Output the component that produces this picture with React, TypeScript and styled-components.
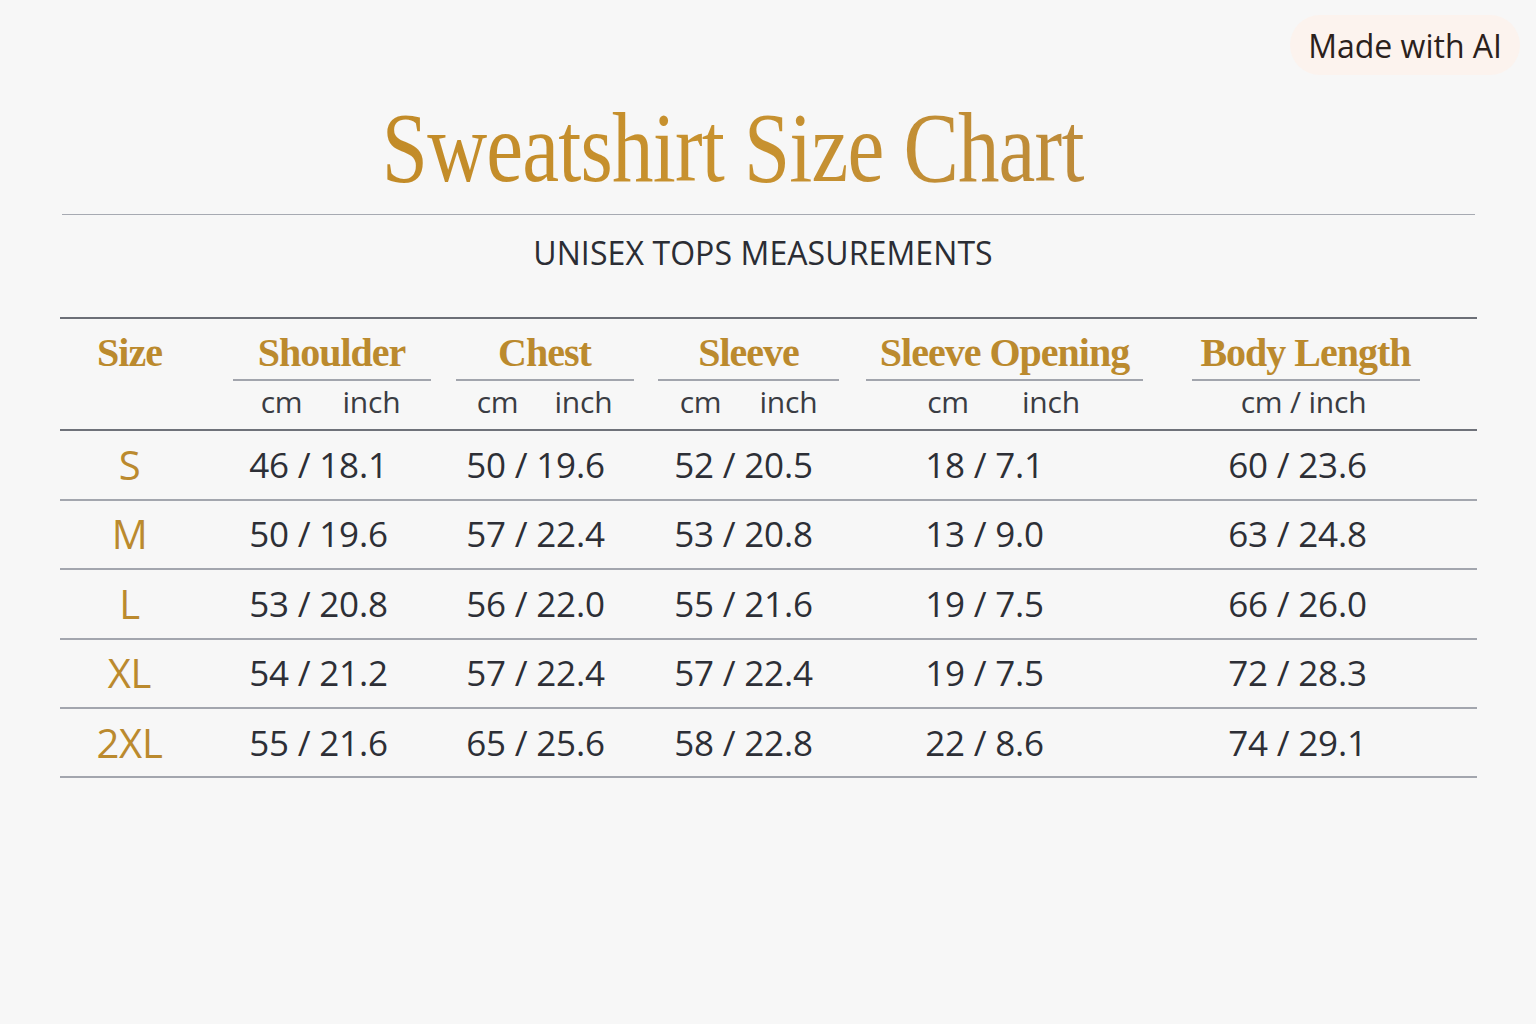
import styled, { createGlobalStyle } from "styled-components";

const GlobalStyle = createGlobalStyle`
  html, body {
    margin: 0;
    padding: 0;
    background: #f7f7f7;
  }
  body {
    font-family: "Open Sans", "Liberation Sans", sans-serif;
    color: #2d2f36;
  }
`;

const GOLD = "#bb8a2e";

const Page = styled.div`
  position: relative;
  min-height: 1024px;
  padding-top: 98px;
  box-sizing: border-box;
`;

const Badge = styled.div`
  position: absolute;
  top: 15px;
  right: 16px;
  height: 60px;
  padding: 0 18px;
  display: flex;
  align-items: center;
  border-radius: 30px;
  background: #fcf3ee;
  color: #2b211c;
  font-size: 32px;
  letter-spacing: 0;
`;

const Sheet = styled.div`
  width: 1417px;
  margin: 0 auto;
`;

const TitleRow = styled.div`
  display: flex;
  justify-content: center;
  padding: 0 70px 16px 0;
  margin: 0 2px;
  border-bottom: 1px solid #a7aab2;
`;

const Title = styled.h1`
  margin: 0;
  display: inline-block;
  font-family: "Liberation Serif", "DejaVu Serif", serif;
  font-weight: 400;
  font-size: 100px;
  line-height: 1;
  letter-spacing: -1px;
  transform: scaleX(0.83);
  background: linear-gradient(90deg, #c28b28 0%, #c8922f 50%, #bd8b3a 100%);
  -webkit-background-clip: text;
  background-clip: text;
  color: transparent;
`;

const Subtitle = styled.div`
  margin-top: 19px;
  padding-right: 10px;
  text-align: center;
  font-size: 32px;
  line-height: 1.2;
  letter-spacing: 0.1px;
  color: #2b2d34;
`;

const Table = styled.div`
  margin-top: 45px;
  border-top: 2px solid #6c6f77;
`;

const columnsTemplate = "140px 248px 194px 210px 300px 1fr";

const HeadGrid = styled.div`
  display: grid;
  grid-template-columns: ${columnsTemplate};
  grid-template-rows: auto auto;
  padding: 10px 15px 9px 0;
  border-bottom: 2px solid #6f727a;
`;

const Shifted = styled.div<{ $shift: number }>`
  padding-left: ${(p) => (p.$shift > 0 ? p.$shift * 2 : 0)}px;
  padding-right: ${(p) => (p.$shift < 0 ? -p.$shift * 2 : 0)}px;
  display: flex;
  justify-content: center;
  min-width: 0;
`;

const Label = styled.div<{ $line?: number }>`
  width: ${(p) => (p.$line ? `${p.$line}px` : "auto")};
  text-align: center;
  font-family: "Liberation Serif", "DejaVu Serif", serif;
  font-weight: 700;
  font-size: 40px;
  line-height: 1.2;
  letter-spacing: -1px;
  color: ${GOLD};
  padding-bottom: 2px;
  border-bottom: ${(p) => (p.$line ? "2px solid #a2a5ad" : "2px solid transparent")};
  white-space: nowrap;
`;

const Units = styled.div<{ $gap: number }>`
  display: flex;
  gap: ${(p) => p.$gap}px;
  margin-top: 3px;
  font-size: 30px;
  line-height: 1.2;
  color: #3a3c43;
  letter-spacing: -0.2px;
`;

const Row = styled.div`
  display: grid;
  grid-template-columns: ${columnsTemplate};
  align-items: center;
  height: 67.4px;
  padding-right: 15px;
  border-bottom: 2px solid #a3a6ae;
`;

const SizeCell = styled.div`
  text-align: center;
  font-size: 40px;
  line-height: 1.2;
  color: ${GOLD};
  letter-spacing: -0.3px;
`;

const Value = styled(Shifted)`
  font-size: 35px;
  line-height: 1.2;
  color: #2d2f36;
  letter-spacing: -0.2px;
`;

type Column = {
  label: string;
  line: number;
  head: number;
  sub: number;
  data: number;
  gap: number;
  units: string[];
};

const columns: Column[] = [
  { label: "Shoulder", line: 198, head: 8, sub: 7, data: -5, gap: 40, units: ["cm", "inch"] },
  { label: "Chest", line: 178, head: 0, sub: 0, data: -9, gap: 36, units: ["cm", "inch"] },
  { label: "Sleeve", line: 181, head: 2, sub: 2, data: -3, gap: 38, units: ["cm", "inch"] },
  { label: "Sleeve Opening", line: 277, head: 3, sub: 2, data: -17, gap: 53, units: ["cm", "inch"] },
  { label: "Body Length", line: 228, head: -1, sub: -3, data: -9, gap: 0, units: ["cm / inch"] },
];

const rows = [
  { size: "S", values: ["46 / 18.1", "50 / 19.6", "52 / 20.5", "18 / 7.1", "60 / 23.6"] },
  { size: "M", values: ["50 / 19.6", "57 / 22.4", "53 / 20.8", "13 / 9.0", "63 / 24.8"] },
  { size: "L", values: ["53 / 20.8", "56 / 22.0", "55 / 21.6", "19 / 7.5", "66 / 26.0"] },
  { size: "XL", values: ["54 / 21.2", "57 / 22.4", "57 / 22.4", "19 / 7.5", "72 / 28.3"] },
  { size: "2XL", values: ["55 / 21.6", "65 / 25.6", "58 / 22.8", "22 / 8.6", "74 / 29.1"] },
];

export default function App() {
  return (
    <>
      <GlobalStyle />
      <Page>
        <Badge>Made with AI</Badge>
        <Sheet>
          <TitleRow>
            <Title>Sweatshirt Size Chart</Title>
          </TitleRow>
          <Subtitle>UNISEX TOPS MEASUREMENTS</Subtitle>
          <Table>
            <HeadGrid>
              <Shifted $shift={0}>
                <Label>Size</Label>
              </Shifted>
              {columns.map((c) => (
                <Shifted key={c.label} $shift={c.head}>
                  <Label $line={c.line}>{c.label}</Label>
                </Shifted>
              ))}
              <div />
              {columns.map((c) => (
                <Shifted key={c.label + "-u"} $shift={c.sub}>
                  <Units $gap={c.gap}>
                    {c.units.map((u) => (
                      <span key={u}>{u}</span>
                    ))}
                  </Units>
                </Shifted>
              ))}
            </HeadGrid>
            {rows.map((r) => (
              <Row key={r.size}>
                <SizeCell>{r.size}</SizeCell>
                {r.values.map((v, i) => (
                  <Value key={i} $shift={columns[i].data}>
                    {v}
                  </Value>
                ))}
              </Row>
            ))}
          </Table>
        </Sheet>
      </Page>
    </>
  );
}
